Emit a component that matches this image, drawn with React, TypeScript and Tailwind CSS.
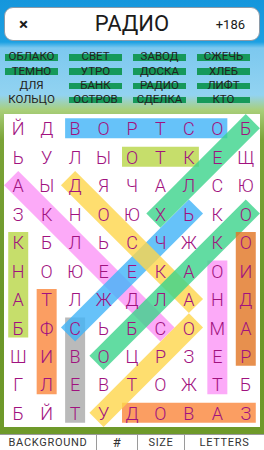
const ROWS = [
  'ЙДВОРТСОБ',
  'ЬУЛЫОТКЕЩ',
  'АЫДЯЧАЛСЮ',
  'ЗКНОЮХЬКО',
  'КБЛЬСЧЖКО',
  'НОЮЕЕКАОИ',
  'АТЛЖДЛАНД',
  'БФСЬБСОМА',
  'ШИВОЦРЗЕР',
  'ГЛЕВТОЖТБ',
  'БЙТУДОВАЗ',
]

const WORDS: { w: string; found: boolean }[] = [
  { w: 'ОБЛАКО', found: true }, { w: 'СВЕТ', found: true }, { w: 'ЗАВОД', found: true }, { w: 'СЖЕЧЬ', found: true },
  { w: 'ТЕМНО', found: true }, { w: 'УТРО', found: true }, { w: 'ДОСКА', found: true }, { w: 'ХЛЕБ', found: true },
  { w: 'ДЛЯ', found: false }, { w: 'БАНК', found: true }, { w: 'РАДИО', found: true }, { w: 'ЛИФТ', found: true },
  { w: 'КОЛЬЦО', found: false }, { w: 'ОСТРОВ', found: true }, { w: 'СДЕЛКА', found: true }, { w: 'КТО', found: true },
]

// [row1, col1, row2, col2, color] (1-based)
const MARKS: [number, number, number, number, string][] = [
  [8, 3, 11, 3, '#aaaaaa'],
  [7, 2, 10, 2, '#fb863b'],
  [11, 5, 11, 9, '#fb863b'],
  [5, 1, 8, 1, '#b8d647'],
  [2, 5, 2, 7, '#b8d647'],
  [1, 3, 1, 8, '#41b4f8'],
  [3, 1, 8, 6, '#fc95f7'],
  [6, 8, 10, 8, '#fc95f7'],
  [4, 7, 8, 3, '#41b4f8'],
  [3, 3, 7, 7, '#fed64c'],
  [11, 4, 8, 7, '#fed64c'],
  [4, 6, 1, 9, '#3bd48b'],
  [9, 4, 4, 9, '#3bd48b'],
  [5, 9, 9, 9, '#e27523'],
]

const CW = 256 / 9
const RH = 313 / 11

export default function App() {
  const font = { fontFamily: 'Roboto, "Noto Sans", sans-serif' }
  return (
    <div
      className="relative flex h-[450px] w-[264px] flex-col overflow-hidden bg-[linear-gradient(to_bottom,#1596dc_0px,#1ca0e2_42px,#7cc8ef_48px,#92d3f1_95px,#a9cf7a_110px,#7aa337_140px,#6b9629_300px,#6f9a2a_450px)]"
      style={font}
    >
      <div className="px-1 pt-[7px]">
        <div className="flex h-[34px] items-center rounded-[9px] border border-[#8a9aa8] bg-white px-[14px] text-[#1b1b1b]">
          <span className="w-[40px] text-[17px] font-bold leading-none">×</span>
          <span className="flex-1 text-center text-[22px] leading-none">РАДИО</span>
          <span className="w-[40px] text-right text-[13px] leading-none">+186</span>
        </div>
      </div>

      <div className="mt-[9px] grid grid-cols-[53px_53px_53px_53px] gap-x-[11px] pl-[5px]">
        {WORDS.map((x, i) => (
          <div key={i} className="relative flex h-[14.3px] items-center justify-center">
            {x.found && <div className="absolute inset-x-0 top-[4px] h-[6.5px] bg-[#16995a]" />}
            <span className="relative text-[11.5px] leading-none text-[#222]">{x.w}</span>
          </div>
        ))}
      </div>

      <div className="relative mx-1 mt-[7px] h-[313px] w-[256px] bg-white">
        <svg className="absolute inset-0" width={256} height={313}>
          {MARKS.map(([r1, c1, r2, c2, col], i) => (
            <line
              key={i}
              x1={(c1 - 0.5) * CW}
              y1={(r1 - 0.5) * RH}
              x2={(c2 - 0.5) * CW}
              y2={(r2 - 0.5) * RH}
              stroke={col}
              strokeWidth={20}
              strokeLinecap="square"
              opacity={0.8}
            />
          ))}
        </svg>
        <div className="relative grid h-full grid-cols-9 grid-rows-11">
          {ROWS.flatMap((row, r) =>
            row.split('').map((ch, c) => (
              <div key={r + '-' + c} className="flex items-center justify-center pt-[2px] text-[18px] font-light leading-none text-[#a1127f]">
                {ch}
              </div>
            )),
          )}
        </div>
      </div>

      <div className="mt-auto flex h-[16px] border-t border-[#9a9a9a] bg-white text-[11px] leading-none tracking-[0.7px] text-[#333]">
        <div className="flex w-[97px] items-center justify-center border-r border-[#9a9a9a]">BACKGROUND</div>
        <div className="flex w-[41px] items-center justify-center border-r border-[#9a9a9a] text-[13px]">#</div>
        <div className="flex w-[47px] items-center justify-center border-r border-[#9a9a9a]">SIZE</div>
        <div className="flex flex-1 items-center justify-center">LETTERS</div>
      </div>
    </div>
  )
}
